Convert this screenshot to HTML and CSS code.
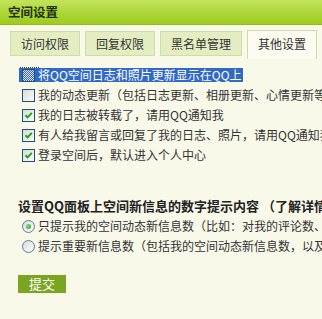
FILE: index.html
```html
<!DOCTYPE html>
<html lang="zh-CN">
<head>
    <meta charset="UTF-8">
    <meta name="viewport" content="width=device-width, initial-scale=1.0">
    <title>空间设置</title>
    <link rel="stylesheet" href="styles.css">
</head>
<body>
    <div class="title">空间设置</div>

    <!-- 选项卡 -->
    <div class="tabs">
        <div class="tab">访问权限</div>
        <div class="tab">回复权限</div>
        <div class="tab">黑名单管理</div>
        <div class="tab active">其他设置</div>
    </div>

    <form class="settings">
        <div class="row">
            <span class="sel">
                <span class="check checked focused">
                    <svg width="11" height="11" viewBox="0 0 11 11">
                        <defs>
                            <pattern id="hatch" width="2" height="2" patternUnits="userSpaceOnUse">
                                <rect width="2" height="2" fill="#dfe6f4"/>
                                <rect width="1" height="1" fill="#3a63b8"/>
                                <rect x="1" y="1" width="1" height="1" fill="#3a63b8"/>
                            </pattern>
                        </defs>
                        <rect width="11" height="11" fill="url(#hatch)"/>
                    </svg>
                </span>
                <span class="label">将QQ空间日志和照片更新显示在QQ上</span>
            </span>
        </div>
        <div class="row">
            <span class="check"></span>
            <span class="label">我的动态更新（包括日志更新、相册更新、心情更新等）发生时，请用QQ通知我</span>
        </div>
        <div class="row">
            <span class="check checked">
                <svg width="11" height="11" viewBox="0 0 11 11"><path d="M2.5 5.2 L4.6 7.4 L8.8 2.8" fill="none" stroke="#21a121" stroke-width="2"/></svg>
            </span>
            <span class="label">我的日志被转载了，请用QQ通知我</span>
        </div>
        <div class="row">
            <span class="check checked">
                <svg width="11" height="11" viewBox="0 0 11 11"><path d="M2.5 5.2 L4.6 7.4 L8.8 2.8" fill="none" stroke="#21a121" stroke-width="2"/></svg>
            </span>
            <span class="label">有人给我留言或回复了我的日志、照片，请用QQ通知我</span>
        </div>
        <div class="row">
            <span class="check checked">
                <svg width="11" height="11" viewBox="0 0 11 11"><path d="M2.5 5.2 L4.6 7.4 L8.8 2.8" fill="none" stroke="#21a121" stroke-width="2"/></svg>
            </span>
            <span class="label">登录空间后，默认进入个人中心</span>
        </div>

        <h2 class="heading">设置QQ面板上空间新信息的数字提示内容 （了解详情）</h2>

        <div class="row">
            <span class="radio on"><span class="dot"></span></span>
            <span class="label">只提示我的空间动态新信息数（比如：对我的评论数、回复数等）</span>
        </div>
        <div class="row">
            <span class="radio"></span>
            <span class="label">提示重要新信息数（包括我的空间动态新信息数，以及好友更新数）</span>
        </div>

        <button type="button" class="submit">提交</button>
    </form>
</body>
</html>
```

FILE: styles.css
```css
/* 空间设置 */
body {
    margin: 0;
    padding: 0;
    background-color: #f9f9ea;
    font-family: "Noto Sans CJK SC", "DejaVu Sans", sans-serif;
    font-size: 12px;
    color: #333;
    overflow: hidden;
    white-space: nowrap;
}

.title {
    height: 24px;
    line-height: 24px;
    padding-left: 8px;
    background: linear-gradient(#c2e35a, #9ccb1d);
    border-bottom: 1px solid #8fbc17;
    font-weight: bold;
    font-size: 12.5px;
    color: #232f0c;
}

.tabs {
    display: flex;
    align-items: flex-end;
    gap: 5px;
    margin-top: 6px;
    padding-left: 10px;
    height: 28px;
}

.tab {
    height: 23px;
    line-height: 23px;
    padding: 0 10px;
    margin-bottom: 3px;
    background-color: #e4edc1;
    border: 1px solid #d0dca6;
    color: #333;
    flex-shrink: 0;
}

.tab.active {
    height: 28px;
    margin-bottom: 0;
    line-height: 26px;
    background-color: #fbfbef;
    border-bottom: none;
}

.settings {
    padding-top: 6px;
}

.row {
    display: flex;
    align-items: center;
    height: 20px;
    padding-left: 22px;
}

.sel {
    display: flex;
    align-items: center;
    margin-left: -3px;
    padding: 0 3px;
    height: 14px;
    width: 218px;
    background-color: #3169c6;
    color: #fff;
}

.check {
    position: relative;
    box-sizing: border-box;
    width: 13px;
    height: 13px;
    border: 1px solid #1c5180;
    background: linear-gradient(135deg, #dcdcd5, #fbfbf8);
    flex-shrink: 0;
}

.check svg {
    display: block;
}

.check.focused::before {
    content: "";
    position: absolute;
    left: -3px;
    top: -3px;
    width: 19px;
    border-top: 1px dotted #444;
}

.label {
    margin-left: 3px;
    line-height: 20px;
}

.sel .label {
    line-height: 14px;
}

.heading {
    margin: 31px 0 0 18px;
    height: 20px;
    line-height: 20px;
    font-size: 13px;
    font-weight: bold;
    color: #222;
}

.radio {
    box-sizing: border-box;
    width: 13px;
    height: 13px;
    border: 1px solid #5c7ca8;
    border-radius: 50%;
    background: linear-gradient(135deg, #dcdcd5, #fdfdfb);
    display: flex;
    align-items: center;
    justify-content: center;
    flex-shrink: 0;
}

.radio + .label {
    margin-left: 3px;
}

.dot {
    width: 5px;
    height: 5px;
    border-radius: 50%;
    background: radial-gradient(circle at 35% 35%, #7fe07f, #1f9f1f);
}

.submit {
    display: block;
    margin: 19px 0 0 18px;
    width: 48px;
    height: 18px;
    padding: 0;
    border: none;
    background-color: #7ba421;
    color: #fff;
    font-family: "Noto Sans CJK SC", sans-serif;
    font-size: 13px;
    line-height: 18px;
    cursor: pointer;
}
```
